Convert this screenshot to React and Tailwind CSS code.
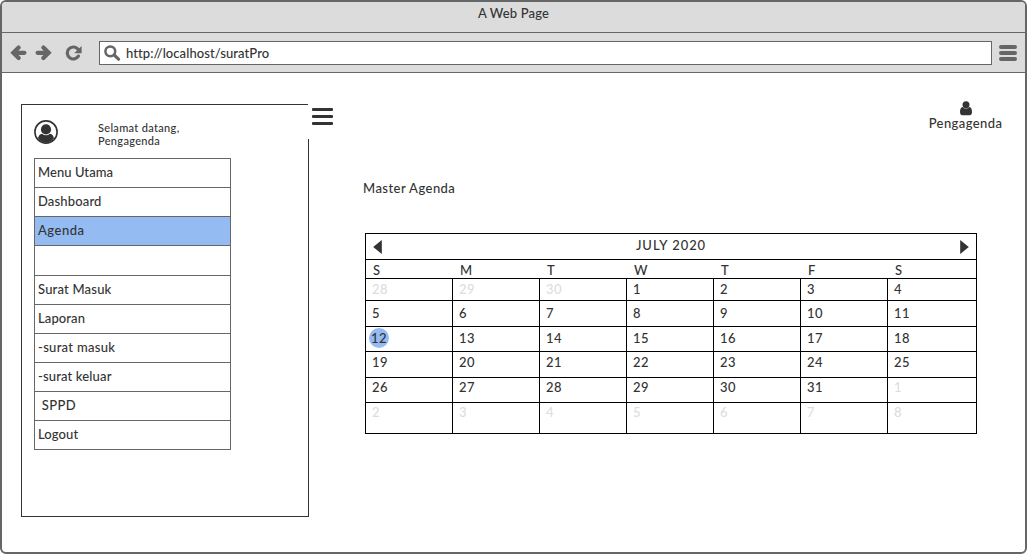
import React from "react";

const MENU = [
  { label: "Menu Utama", cls: "h-[29px] tracking-[0.05px]" },
  { label: "Dashboard", cls: "h-[29px] tracking-[0.15px]" },
  { label: "Agenda", cls: "h-[29px] bg-[#94bbf2] tracking-[0.5px]" },
  { label: "", cls: "h-[30px]" },
  { label: "Surat Masuk", cls: "h-[29px] tracking-[0.2px]" },
  { label: "Laporan", cls: "h-[29px] tracking-[0.1px]" },
  { label: "-surat masuk", cls: "h-[29px] tracking-[0.3px]" },
  { label: "-surat keluar", cls: "h-[29px] tracking-[0.15px]" },
  { label: "\u00a0SPPD", cls: "h-[29px] tracking-[0.4px]" },
  { label: "Logout", cls: "h-[29px] tracking-[0.1px]" },
];

const WEEKS = [
  { days: [28, 29, 30, 1, 2, 3, 4], cls: "h-[22px] pt-[1px]" },
  { days: [5, 6, 7, 8, 9, 10, 11], cls: "h-[26px] pt-[3px]" },
  { days: [12, 13, 14, 15, 16, 17, 18], cls: "h-[25px] pt-[2px]" },
  { days: [19, 20, 21, 22, 23, 24, 25], cls: "h-[26px] pt-[1px]" },
  { days: [26, 27, 28, 29, 30, 31, 1], cls: "h-[25px]" },
  { days: [2, 3, 4, 5, 6, 7, 8], cls: "h-[31px]" },
];

const COLUMNS = "grid grid-cols-[87px_87px_87px_87px_87px_87px_88px]";

function isOutside(week, day) {
  return (week === 0 && day > 7) || (week === 4 && day === 1) || week === 5;
}

function Arrow({ flip }) {
  return (
    <svg className={flip ? "-scale-x-100" : ""} width="17" height="16" viewBox="0 0 17 16">
      <path d="M8.600 2.600 3.300 7.800 8.600 13M4 7.800H14.400" fill="none" stroke="#666" strokeWidth="4.200" strokeLinecap="round" strokeLinejoin="miter" />
    </svg>
  );
}

function BrowserBar() {
  return (
    <div className="flex h-[40px] items-center border-b border-[#666] bg-[#dcdcdc]">
      <div className="flex w-[97px] shrink-0 items-center pl-[8px]">
        <Arrow />
        <span className="w-[8px]" />
        <Arrow flip />
        <svg className="ml-[13px]" width="18" height="16" viewBox="0 0 18 16">
          <path d="M13.400 11.200A6 6 0 1 1 12.600 3.800" fill="none" stroke="#666" strokeWidth="3.200" strokeLinecap="round" />
          <path d="M16.600 1V8.200H9.200Z" fill="#666" />
        </svg>
      </div>
      <div className="flex h-[24px] w-[893px] shrink-0 items-center border border-[#666] bg-white pl-[4px]">
        <svg width="17" height="16" viewBox="0 0 17 16">
          <circle cx="6.3" cy="6.3" r="4.9" fill="none" stroke="#666" strokeWidth="2.5" />
          <path d="m10.3 10.2 4.2 4" stroke="#666" strokeWidth="3.2" strokeLinecap="round" />
        </svg>
        <span className="ml-[5px] tracking-[0.08px]">http://localhost/suratPro</span>
      </div>
      <div className="ml-[7px] flex w-[18px] flex-col gap-[2px]">
        <span className="h-[4px] rounded-full bg-[#666]" />
        <span className="h-[4px] rounded-full bg-[#666]" />
        <span className="h-[4px] rounded-full bg-[#666]" />
      </div>
    </div>
  );
}

function Sidebar() {
  return (
    <aside className="relative mt-[31px] ml-[19px] h-[413px] w-[288px] shrink-0 border border-[#333]">
      <div className="flex h-[53px]">
        <svg className="mt-[15px] ml-[12px]" width="24" height="24" viewBox="0 0 24 24">
          <circle cx="12" cy="12" r="11.1" fill="none" stroke="#333" strokeWidth="1.6" />
          <path d="M4 18.300c.400-2.200 1.600-4.100 4.100-4.500a5.700 5.700 0 0 0 7.800 0c2.500.400 3.700 2.300 4.100 4.500A10.800 10.800 0 0 1 12 22.800a10.800 10.800 0 0 1-8-4.500Z" fill="#333" />
          <circle cx="12" cy="9.400" r="5.100" fill="#333" />
        </svg>
        <p className="mt-[16px] ml-[40px] text-[11px] leading-[13px] tracking-[0.32px]">
          Selamat datang,
          <br />
          Pengagenda
        </p>
      </div>
      <nav className="ml-[12px] w-[197px] border-x border-t border-[#666]">
        {MENU.map((item, i) => (
          <div key={i} className={"flex items-center border-b border-[#666] pb-[2px] pl-[3px] " + item.cls}>
            {item.label}
          </div>
        ))}
      </nav>
      <div className="absolute top-[-1px] left-[286px] flex h-[35px] w-[26px] flex-col gap-[4px] bg-white pt-[4px] pl-[4px]">
        <span className="h-[3px] w-[21px] rounded-[1px] bg-[#333]" />
        <span className="h-[3px] w-[21px] rounded-[1px] bg-[#333]" />
        <span className="h-[3px] w-[21px] rounded-[1px] bg-[#333]" />
      </div>
    </aside>
  );
}

function Calendar() {
  return (
    <section className="w-[612px] border-x border-t border-black">
      <header className="flex h-[26px] items-center justify-between border-b border-black px-[7px]">
        <svg width="9" height="14" viewBox="0 0 9 14"><path d="M8.800 0v14L.200 7Z" fill="#333" /></svg>
        <span className="pb-[3px] tracking-[0.95px]">JULY 2020</span>
        <svg width="9" height="14" viewBox="0 0 9 14"><path d="M.200 0v14l8.600-7Z" fill="#333" /></svg>
      </header>
      <div className={COLUMNS + " h-[19px] border-b border-black pt-[1px] leading-[18px]"}>
        {["S", "M", "T", "W", "T", "F", "S"].map((d, i) => (
          <span key={i} className="pl-[7px]">{d}</span>
        ))}
      </div>
      {WEEKS.map((week, w) => (
        <div key={w} className={COLUMNS + " border-b border-black"}>
          {week.days.map((day, d) => (
            <div
              key={d}
              className={
                "pl-[6px] leading-[18px] tracking-[0.4px] " + week.cls +
                (d < 6 ? " border-r border-black" : "") +
                (isOutside(w, day) ? " text-[#ddd]" : "") +
                " -mb-px"
              }
            >
              {day === 12 ? (
                <span className="-mt-px -ml-[3px] flex size-[20px] items-center justify-center rounded-full bg-[#94bbf2]">12</span>
              ) : (
                day
              )}
            </div>
          ))}
        </div>
      ))}
    </section>
  );
}

export default function App() {
  return (
    <div className="flex h-[554px] w-[1027px] flex-col overflow-hidden rounded-[6px] border-2 border-[#666] bg-white font-['Lato','Liberation_Sans',sans-serif] text-[13px] leading-[18px] font-medium text-[#333]">
      <div className="h-[31px] shrink-0 border-b border-[#666] bg-[#dcdcdc] pt-[2px] text-center tracking-[0.15px]">A Web Page</div>
      <BrowserBar />
      <main className="flex">
        <Sidebar />
        <div className="ml-[54px] flex w-[640px] flex-col">
          <div className="mt-[28px] flex w-[75px] flex-col items-center self-end">
            <svg width="12" height="15" viewBox="0 0 12 15">
              <circle cx="6" cy="3.8" r="3.5" fill="#333" />
              <path d="M2.6 6.1a4.6 4.6 0 0 0 6.8 0C11.3 6.4 12 8.6 12 11.1c0 2-.8 3.1-2.2 3.1H2.2C.8 14.200 0 13.100 0 11.100 0 8.600.7 6.400 2.600 6.100Z" fill="#333" />
            </svg>
            <span className="-mt-[2px] tracking-[0.4px]">Pengagenda</span>
          </div>
          <h1 className="mt-[47px] tracking-[0.45px]">Master Agenda</h1>
          <div className="mt-[36px] ml-[2px]">
            <Calendar />
          </div>
        </div>
      </main>
    </div>
  );
}
